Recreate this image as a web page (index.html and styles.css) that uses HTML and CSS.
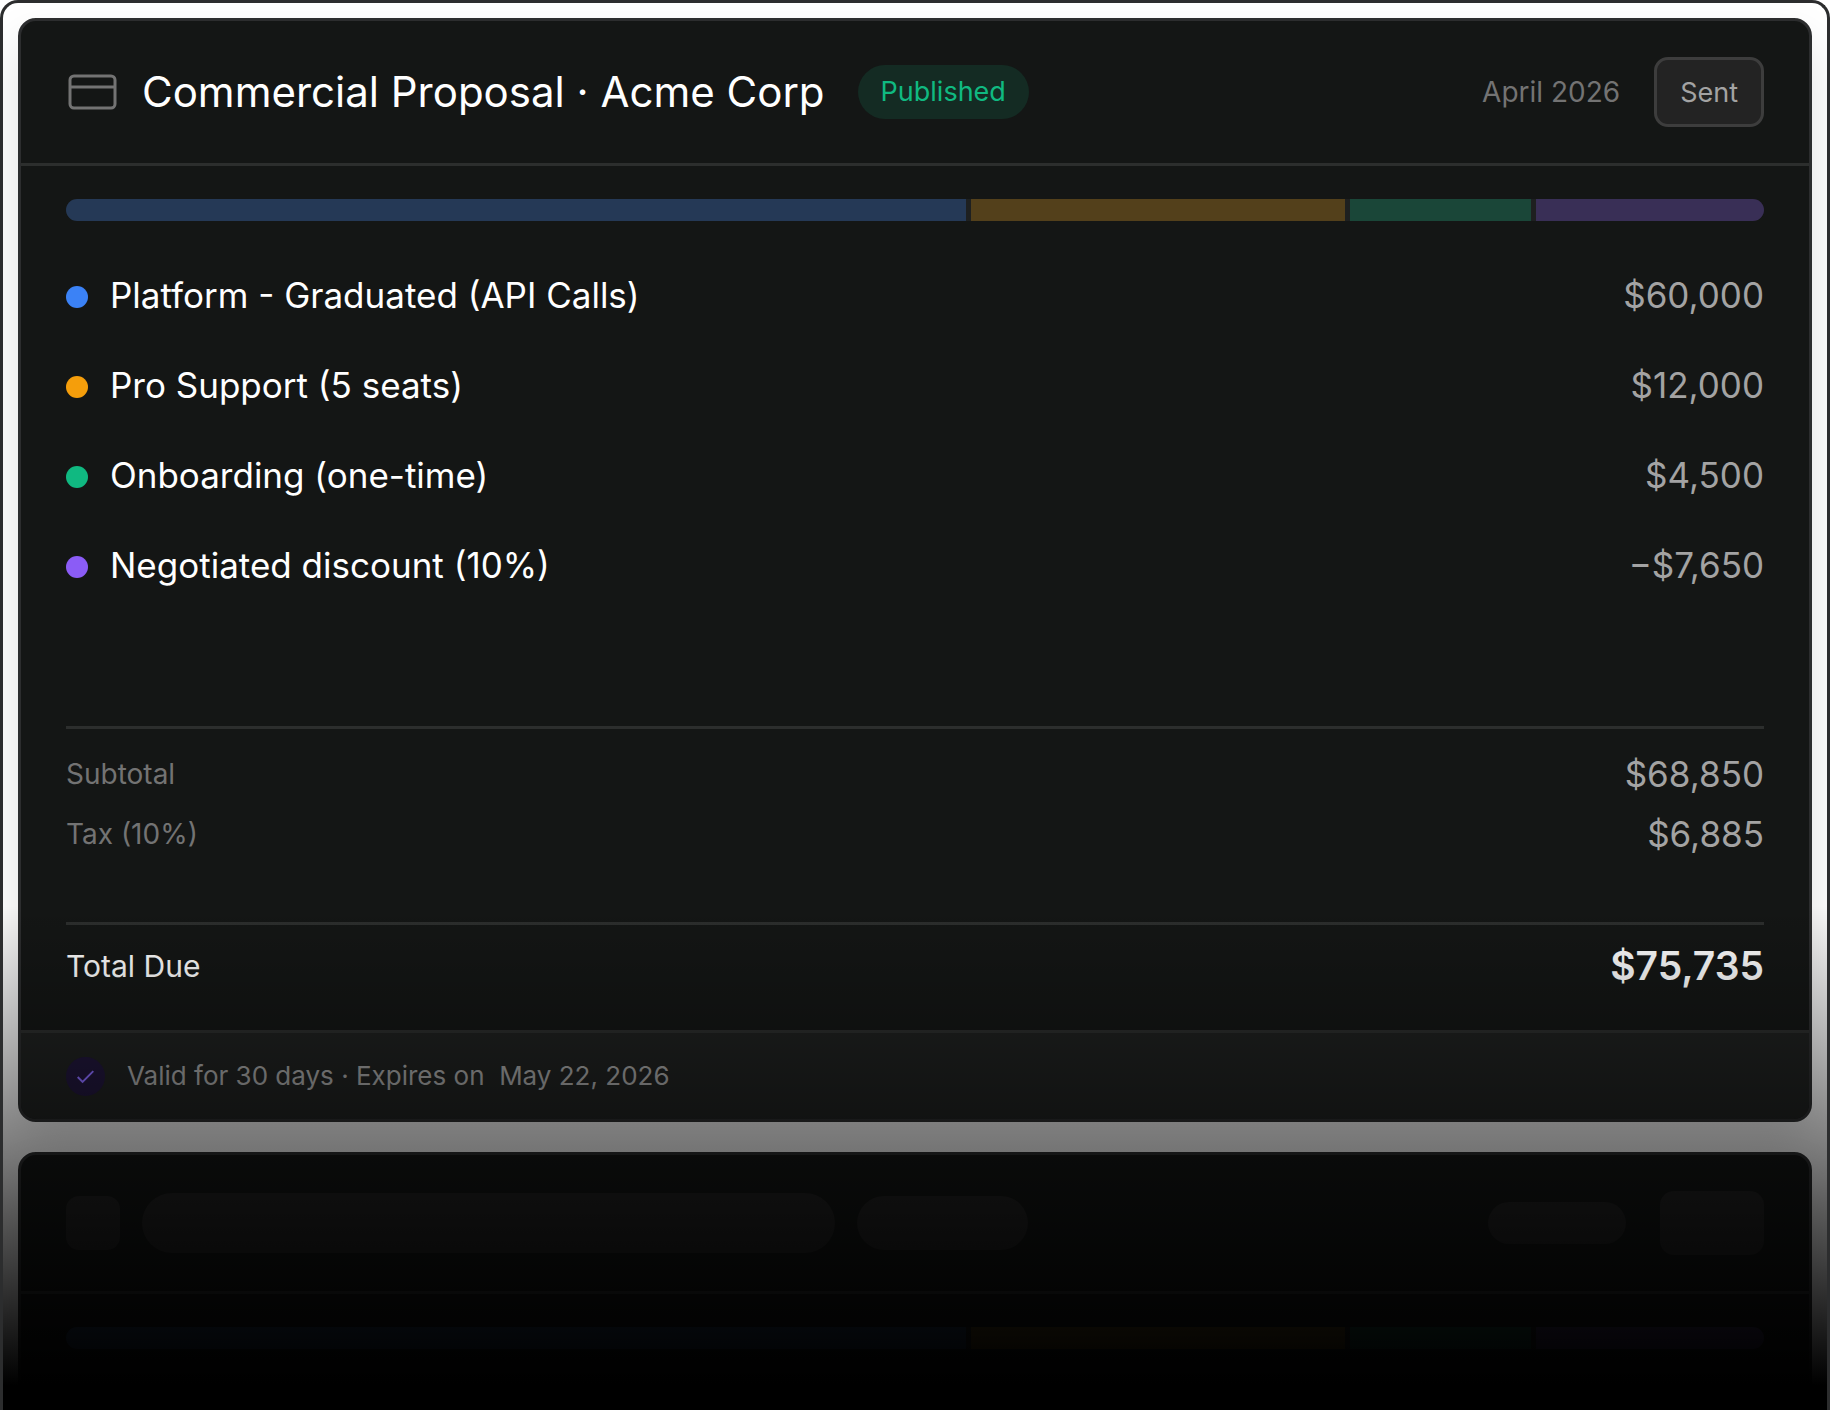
FILE: index.html
```html
<!DOCTYPE html>
<html lang="en">

	<head>

		<meta charset="UTF-8">
		<meta name="viewport" content="width=device-width, initial-scale=1">
		<link rel="stylesheet" href="styles.css">
		<title>Commercial Proposal</title>

	</head>

	<body>

		<main class="frame">

			<section class="card">
				<header class="card-header">
					<svg class="card-icon" viewBox="0 0 54 54" fill="none" stroke="currentColor" stroke-width="3" aria-hidden="true">
						<rect x="4" y="11" width="45" height="32" rx="4"/>
						<path d="M4 22h45"/>
					</svg>
					<h1 class="title">Commercial Proposal · Acme Corp</h1>
					<span class="badge">Published</span>
					<span class="date">April 2026</span>
					<button class="btn-sent" type="button">Sent</button>
				</header>

				<div class="card-body">
					<div class="bar">
						<span class="segment blue"></span>
						<span class="segment orange"></span>
						<span class="segment green"></span>
						<span class="segment purple"></span>
					</div>

					<table class="items">
						<tr>
							<th scope="row"><span class="dot blue"></span>Platform - Graduated (API Calls)</th>
							<td>$60,000</td>
						</tr>
						<tr>
							<th scope="row"><span class="dot orange"></span>Pro Support (5 seats)</th>
							<td>$12,000</td>
						</tr>
						<tr>
							<th scope="row"><span class="dot green"></span>Onboarding (one-time)</th>
							<td>$4,500</td>
						</tr>
						<tr>
							<th scope="row"><span class="dot purple"></span>Negotiated discount (10%)</th>
							<td>−$7,650</td>
						</tr>
					</table>

					<div class="totals">
						<table class="sums">
							<tr>
								<th scope="row">Subtotal</th>
								<td>$68,850</td>
							</tr>
							<tr>
								<th scope="row">Tax (10%)</th>
								<td>$6,885</td>
							</tr>
						</table>
					</div>

					<div class="total-due">
						<span class="total-label">Total Due</span>
						<strong class="total-value">$75,735</strong>
					</div>
				</div>

				<footer class="card-footer">
					<svg class="check" viewBox="0 0 40 40" fill="none" aria-hidden="true">
						<circle cx="20" cy="20" r="20" fill="#20163a"/>
						<path d="M12 20.5l5 5L28 14.500" stroke="#8b6cff" stroke-width="2"/>
					</svg>
					<p class="footer-text">Valid for 30 days · Expires on&nbsp; May 22, 2026</p>
				</footer>
			</section>

			<!-- Next proposal, still loading -->
			<section class="card card-loading" aria-hidden="true">
				<div class="card-header">
					<span class="skeleton skeleton-icon"></span>
					<span class="skeleton skeleton-title"></span>
					<span class="skeleton skeleton-badge"></span>
					<span class="skeleton skeleton-date"></span>
					<span class="skeleton skeleton-btn"></span>
				</div>
				<div class="card-body">
					<div class="bar">
						<span class="segment blue"></span>
						<span class="segment orange"></span>
						<span class="segment green"></span>
						<span class="segment purple"></span>
					</div>
				</div>
			</section>

			<div class="fade"></div>

		</main>

	</body>
</html>
```
FILE: styles.css
```css
* {
	box-sizing: border-box;
}
body {
	margin: 0;
	background: #fff;
	font-family: Inter, sans-serif;
	font-size: 28px;
	line-height: 48px;
}
.frame {
	position: relative;
	height: 100vh;
	overflow: hidden;
	padding: 15px;
	border: 3px solid #2c2d2e;
	border-bottom: 0;
	border-radius: 18px 18px 0 0;
	background: #fff;
}
.card {
	margin-bottom: 30px;
	border: 3px solid #2c2d2e;
	border-radius: 18px;
	background: #141615;
	box-shadow: 0 24px 48px rgba(0, 0, 0, 0.12);
	overflow: hidden;
}
.card-header {
	display: flex;
	align-items: center;
	height: 145px;
	padding: 0 45px;
	border-bottom: 3px solid #2c2e2d;
}
.card-icon {
	flex: none;
	width: 54px;
	height: 54px;
	margin-right: 22px;
	color: #737373;
}
.title {
	margin: 0 33px 0 0;
	font-size: 42px;
	font-weight: 400;
	color: #fff;
}
.badge {
	padding: 3px 23px;
	border-radius: 27px;
	background: #142b23;
	font-size: 27px;
	color: #10b981;
}
.date {
	margin-left: auto;
	margin-right: 34px;
	color: #737373;
}
.btn-sent {
	height: 70px;
	padding: 0 23px;
	border: 3px solid #3d3d3d;
	border-radius: 14px;
	background: #232323;
	font-family: inherit;
	font-size: 27px;
	color: #a3a3a3;
}
.card-body {
	padding: 33px 45px 0;
}
.bar {
	display: grid;
	grid-template-columns: 900fr 374fr 181fr 228fr;
	gap: 5px;
	height: 22px;
	border-radius: 11px;
	background: #1e2020;
	overflow: hidden;
}
.segment {
	opacity: 0.25;
}
.blue {
	background: #3b82f6;
}
.orange {
	background: #f59e0b;
}
.green {
	background: #10b981;
}
.purple {
	background: #8b5cf6;
}
.items,
.sums {
	width: 100%;
	border-collapse: collapse;
}
.items {
	margin: 29px 0 116px;
}
.items tr {
	height: 90px;
}
th,
td {
	padding: 0;
	font-weight: 400;
	text-align: left;
}
td {
	text-align: right;
	font-size: 35px;
	color: #a3a3a3;
}
.items th {
	font-size: 35px;
	color: #fff;
}
.dot {
	display: inline-block;
	width: 22px;
	height: 22px;
	margin-right: 22px;
	border-radius: 50%;
}
.totals {
	padding: 15px 0 58px;
	border-top: 3px solid #2c2e2d;
}
.sums tr {
	height: 60px;
}
.sums th {
	color: #737373;
}
.total-due {
	display: flex;
	justify-content: space-between;
	padding: 17px 0 40px;
	border-top: 3px solid #2c2e2d;
}
.total-label {
	font-size: 30px;
	color: #fff;
}
.total-value {
	font-size: 39px;
	font-weight: 600;
	color: #fff;
}
.card-footer {
	display: flex;
	align-items: center;
	gap: 22px;
	height: 89px;
	padding: 0 45px;
	border-top: 3px solid #2c2e2d;
	background: #1f2120;
}
.check {
	flex: none;
	width: 39px;
	height: 39px;
}
.footer-text {
	margin: 0;
	font-size: 26px;
	color: #a3a3a3;
}
.card-loading {
	height: 1100px;
}
.card-loading .card-header {
	height: 139px;
}
.skeleton {
	background: #232323;
}
.skeleton-icon {
	width: 54px;
	height: 54px;
	margin-right: 22px;
	border-radius: 13px;
}
.skeleton-title {
	width: 693px;
	height: 60px;
	margin-right: 22px;
	border-radius: 30px;
}
.skeleton-badge {
	width: 171px;
	height: 54px;
	border-radius: 27px;
}
.skeleton-date {
	width: 138px;
	height: 42px;
	margin-left: auto;
	margin-right: 34px;
	border-radius: 21px;
}
.skeleton-btn {
	width: 104px;
	height: 64px;
	border-radius: 14px;
}
/* darkens the lower part of the page down to black */
.fade {
	position: absolute;
	left: -3px;
	right: -3px;
	bottom: 0;
	height: 504px;
	background: linear-gradient(transparent, #000 95%);
}
```
